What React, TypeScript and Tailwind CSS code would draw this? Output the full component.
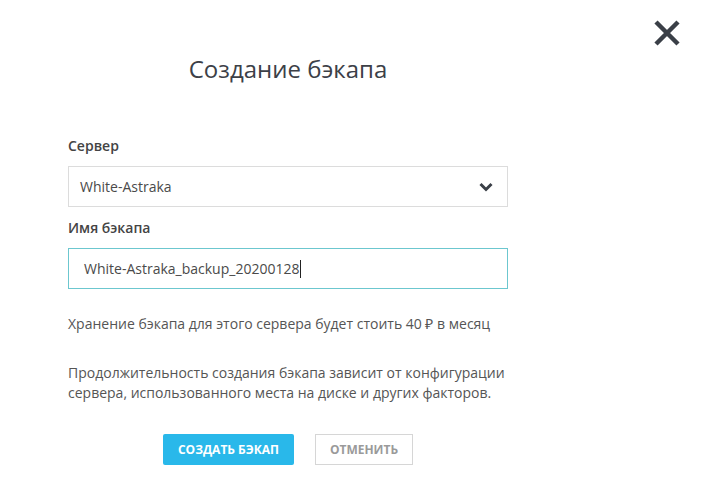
export default function App() {
  return (
    <div
      className="relative h-[487px] w-[707px] bg-white text-[#4a4a4a]"
      style={{ fontFamily: '"Open Sans", "Liberation Sans", sans-serif' }}
    >
      <button type="button" className="absolute right-[26px] top-[19px] text-[#3a3f47]">
        <svg width="28" height="28" viewBox="0 0 28 28">
          <path d="M3 3 L25 25 M25 3 L3 25" stroke="currentColor" strokeWidth="4.5" strokeLinecap="butt" />
        </svg>
      </button>

      <div className="ml-[68px] flex w-[440px] flex-col">
        <h1 className="mt-[53px] text-center text-[24px] leading-[32px] text-[#3c4047]">
          Создание бэкапа
        </h1>

        <label className="mt-[51px] text-[14px] font-semibold leading-[20px] text-[#444]">Сервер</label>
        <div className="mt-[10px] flex h-[41px] items-center justify-between border border-[#dcdcdc] pl-[11px] pr-[14px] text-[14px] text-[#4a4a4a]">
          <span>White-Astraka</span>
          <svg width="14" height="10" viewBox="0 0 14 10" className="text-[#3a3f47]">
            <path d="M1.5 2 L7 7.5 L12.5 2" fill="none" stroke="currentColor" strokeWidth="3" />
          </svg>
        </div>

        <label className="mt-[11px] text-[14px] font-semibold leading-[20px] text-[#444]">Имя бэкапа</label>
        <div className="mt-[10px] flex h-[41px] items-center border border-[#6cc7cf] pl-[15px] text-[14px] text-[#4a4a4a]">
          <span>White-Astraka_backup_20200128</span>
          <span className="ml-px h-[18px] w-px bg-[#222]" />
        </div>

        <p className="mt-[25px] text-[14px] leading-[20px] text-[#555]">
          Хранение бэкапа для этого сервера будет стоить 40 ₽ в месяц
        </p>

        <p className="mt-[29px] text-[14px] leading-[20px] text-[#555]">
          Продолжительность создания бэкапа зависит от конфигурации сервера, использованного места на диске и других факторов.
        </p>

        <div className="mt-[31px] flex justify-center gap-[21px]">
          <button
            type="button"
            className="h-[31px] w-[131px] rounded-[2px] bg-[#29b8ea] text-[12px] font-bold text-white"
          >
            СОЗДАТЬ БЭКАП
          </button>
          <button
            type="button"
            className="h-[31px] w-[98px] border border-[#d6d6d6] bg-white text-[12px] font-bold text-[#9a9a9a]"
          >
            ОТМЕНИТЬ
          </button>
        </div>
      </div>
    </div>
  );
}
